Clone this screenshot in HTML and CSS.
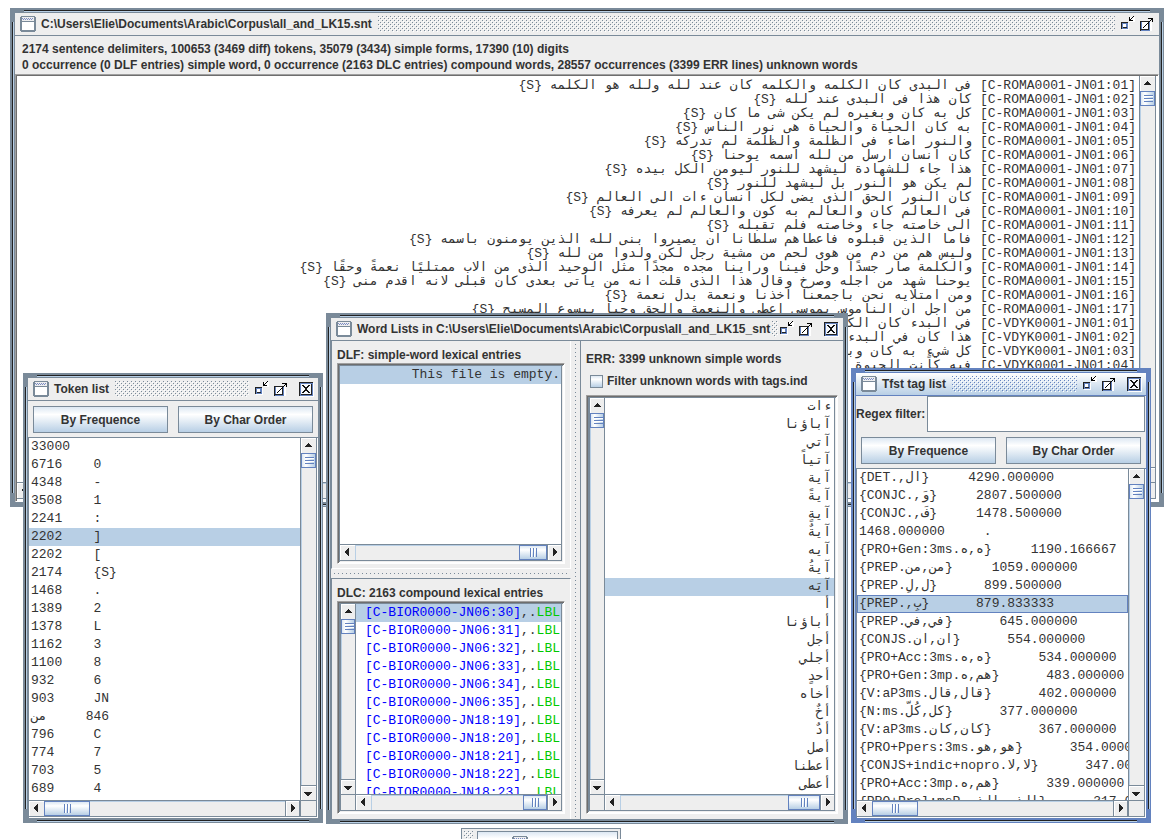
FILE: index.html
```html
<!DOCTYPE html>
<html lang="en">
<head>
<meta charset="utf-8">
<title>Corpus workspace</title>
<link rel="stylesheet" href="styles.css">
</head>
<body>
<svg class="sprite" aria-hidden="true">
  <symbol id="i-menu" viewBox="0 0 16 16"><path fill="#7a8a99" d="M1 0h14v1h1v14h-1v1H1v-1H0V1h1z"/><path fill="#fff" d="M2 6h12v8H2z"/><path fill="#eee" d="M2 1h12v4H2z"/><path fill="#7b8cc4" d="M2 2h1v1H2zM4 2h1v1H4zM6 2h1v1H6zM8 2h1v1H8zM10 2h1v1h-1zM12 2h1v1h-1zM3 3h1v1H3zM5 3h1v1H5zM7 3h1v1H7zM9 3h1v1H9zM11 3h1v1h-1z"/></symbol>
  <symbol id="i-min" viewBox="0 0 16 16"><path fill="#fff" d="M2 7h7v7H2zM10 1h5v5h-5z"/><path fill="#222" d="M1 6h7v7H1z"/><path fill="#6382bf" d="M2 7h6v6H2z"/><path fill="#222" d="M3 11h4v1H3z"/><path fill="#fff" d="M3 8h3v3H3z"/><path fill="#000" d="M9 1h1v4H9zM9 4h4v1H9zM10 3h1v1h-1zM11 2h1v1h-1zM12 1h1v1h-1zM13 0h1v1h-1z"/></symbol>
  <symbol id="i-max" viewBox="0 0 16 16"><path fill="#fff" d="M2 6h11v9H2z"/><path fill="#222" d="M1 5h10v10H1z"/><path fill="#6382bf" d="M2 6h9v9H2z"/><path fill="#222" d="M2 13h8v1H2zM9 6h1v8H9z"/><path fill="#fff" d="M3 6h6v7H3z"/><path fill="#000" d="M4 11h1v1H4zM5 10h1v1H5zM6 9h1v1H6zM7 8h1v1H7zM8 7h1v1H8zM9 6h1v1H9zM10 5h1v1h-1zM11 4h1v1h-1zM12 3h1v1h-1zM9 2h5v1H9zM13 2h1v4h-1z"/></symbol>
  <symbol id="i-close" viewBox="0 0 16 16"><path fill="#fff" d="M2 2h14v14H2z"/><path fill="#222" d="M1 1h14v14H1z"/><path fill="#6382bf" d="M2 2h13v13H2z"/><path fill="#222" d="M3 13h11v1H3zM13 3h1v11h-1z"/><path fill="#f4f7fb" d="M3 3h10v10H3z"/><path fill="#111" d="M4 4h2v1H4zM5 5h2v1H5zM6 6h2v1H6zM7 7h2v2H7zM6 9h2v1H6zM5 10h2v1H5zM4 11h2v1H4zM10 4h2v1h-2zM9 5h2v1H9zM8 6h2v1H8zM8 9h2v1H8zM9 10h2v1H9zM10 11h2v1h-2z"/></symbol>
  <symbol id="a-up" viewBox="0 0 15 15"><path fill="#222" d="M7 5h1v1h1v1h1v1h1v1H4V8h1V7h1V6h1z"/></symbol>
  <symbol id="a-down" viewBox="0 0 15 15"><path fill="#222" d="M3 6h8v1h-1v1H9v1H8v1H6V9H5V8H4V7H3z"/></symbol>
  <symbol id="a-left" viewBox="0 0 15 15"><path fill="#222" d="M9 3v8H8v-1H7V9H6V8H5V6h1V5h1V4h1V3z"/></symbol>
  <symbol id="a-right" viewBox="0 0 15 15"><path fill="#222" d="M5 3v8h1v-1h1V9h1V8h1V6H8V5H7V4H6V3z"/></symbol>
</svg>
<main class="desktop">

<section class="win win-corpus" aria-labelledby="t1">
  <header class="title"><svg class="ico"><use href="#i-menu"/></svg><h2 id="t1">C:\Users\Elie\Documents\Arabic\Corpus\all_and_LK15.snt</h2><span class="bumps"></span>
    <button class="tool" aria-label="Minimize"><svg class="ico"><use href="#i-min"/></svg></button><button class="tool" aria-label="Maximize"><svg class="ico"><use href="#i-max"/></svg></button></header>
  <div class="stats"><p>2174 sentence delimiters, 100653 (3469 diff) tokens, 35079 (3434) simple forms, 17390 (10) digits</p><p>0 occurrence (0 DLF entries) simple word, 0 occurrence (2163 DLC entries) compound words, 28557 occurrences (3399 ERR lines) unknown words</p></div>
  <div class="pane bevel corpus-pane">
    <div class="view text" dir="rtl" lang="ar">
      <p><bdi dir="ltr">[C-ROMA0001-JN01:01]</bdi> فى البدى كان الكلمه والكلمه كان عند لله ولله هو الكلمه {S}</p>
      <p><bdi dir="ltr">[C-ROMA0001-JN01:02]</bdi> كان هذا فى البدى عند لله {S}</p>
      <p><bdi dir="ltr">[C-ROMA0001-JN01:03]</bdi> كل به كان وبغيره لم يكن شى ما كان {S}</p>
      <p><bdi dir="ltr">[C-ROMA0001-JN01:04]</bdi> به كان الحياة والحياة هى نور الناس {S}</p>
      <p><bdi dir="ltr">[C-ROMA0001-JN01:05]</bdi> والنور اضاء فى الظلمة والظلمة لم تدركه {S}</p>
      <p><bdi dir="ltr">[C-ROMA0001-JN01:06]</bdi> كان انسان ارسل من لله اسمه يوحنا {S}</p>
      <p><bdi dir="ltr">[C-ROMA0001-JN01:07]</bdi> هذا جاء للشهادة ليشهد للنور ليومن الكل بيده {S}</p>
      <p><bdi dir="ltr">[C-ROMA0001-JN01:08]</bdi> لم يكن هو النور بل ليشهد للنور {S}</p>
      <p><bdi dir="ltr">[C-ROMA0001-JN01:09]</bdi> كان النور الحق الذى يضى لكل انسان ءات الى العالم {S}</p>
      <p><bdi dir="ltr">[C-ROMA0001-JN01:10]</bdi> فى العالم كان والعالم به كون والعالم لم يعرفه {S}</p>
      <p><bdi dir="ltr">[C-ROMA0001-JN01:11]</bdi> الى خاصته جاء وخاصته فلم تقبله {S}</p>
      <p><bdi dir="ltr">[C-ROMA0001-JN01:12]</bdi> فاما الذين قبلوه فاعطاهم سلطانا ان يصيروا بنى لله الذين يومنون باسمه {S}</p>
      <p><bdi dir="ltr">[C-ROMA0001-JN01:13]</bdi> وليس هم من دم من هوى لحم من مشية رجل لكن ولدوا من لله {S}</p>
      <p><bdi dir="ltr">[C-ROMA0001-JN01:14]</bdi> والكلمة صار جسدًا وحل فينا وراينا مجده مجدًا مثل الوحيد الذى من الاب ممتليًا نعمةً وحقًا {S}</p>
      <p><bdi dir="ltr">[C-ROMA0001-JN01:15]</bdi> يوحنا شهد من اجله وصرخ وقال هذا الذى قلت انه من ياتى بعدى كان قبلى لانه اقدم منى {S}</p>
      <p><bdi dir="ltr">[C-ROMA0001-JN01:16]</bdi> ومن امتلايه نحن باجمعنا اخذنا ونعمة بدل نعمة {S}</p>
      <p><bdi dir="ltr">[C-ROMA0001-JN01:17]</bdi> من اجل ان الناموس بموسى اعطى والنعمة والحق وحيا بيسوع المسيح {S}</p>
      <p><bdi dir="ltr">[C-VDYK0001-JN01:01]</bdi> في البدء كان الكلمة</p>
      <p><bdi dir="ltr">[C-VDYK0001-JN01:02]</bdi> هذا كان في البدء</p>
      <p><bdi dir="ltr">[C-VDYK0001-JN01:03]</bdi> كل شيءٍ به كان وبغيره</p>
      <p><bdi dir="ltr">[C-VDYK0001-JN01:04]</bdi> فيه كانت الحيوة</p>
    </div>
    <div class="vbar"><button aria-label="Scroll up"><svg><use href="#a-up"/></svg></button><div class="track"><i class="thumb"></i></div><button aria-label="Scroll down"><svg><use href="#a-down"/></svg></button></div>
    <div class="hbar"><button aria-label="Scroll left"><svg><use href="#a-left"/></svg></button><div class="track"><i class="thumb t45"></i></div><button aria-label="Scroll right"><svg><use href="#a-right"/></svg></button></div>
    <div class="corner"></div>
  </div>
</section>

<section class="win win-token" aria-labelledby="t2">
  <header class="title"><svg class="ico"><use href="#i-menu"/></svg><h2 id="t2">Token list</h2><span class="bumps"></span>
    <button class="tool" aria-label="Minimize"><svg class="ico"><use href="#i-min"/></svg></button><button class="tool" aria-label="Maximize"><svg class="ico"><use href="#i-max"/></svg></button><button class="tool shut" aria-label="Close"><svg class="ico"><use href="#i-close"/></svg></button></header>
  <div class="pair"><button class="btn">By Frequence</button><button class="btn">By Char Order</button></div>
  <div class="pane line">
    <ul class="view rows">
      <li>33000</li><li>6716    0</li><li>4348    -</li><li>3508    1</li><li>2241    :</li><li class="sel">2202    ]</li><li>2202    [</li><li>2174    {S}</li><li>1468    .</li><li>1389    2</li><li>1378    L</li><li>1162    3</li><li>1100    8</li><li>932     6</li><li>903     JN</li><li><bdi>من</bdi>     846</li><li>796     C</li><li>774     7</li><li>703     5</li><li>689     4</li>
    </ul>
    <div class="vbar"><button aria-label="Scroll up"><svg><use href="#a-up"/></svg></button><div class="track"><i class="thumb"></i></div><button aria-label="Scroll down"><svg><use href="#a-down"/></svg></button></div>
    <div class="hbar"><button aria-label="Scroll left"><svg><use href="#a-left"/></svg></button><div class="track"><i class="thumb t45"></i></div><button aria-label="Scroll right"><svg><use href="#a-right"/></svg></button></div>
    <div class="corner"></div>
  </div>
</section>

<section class="win win-words" aria-labelledby="t3">
  <header class="title"><svg class="ico"><use href="#i-menu"/></svg><h2 id="t3">Word Lists in C:\Users\Elie\Documents\Arabic\Corpus\all_and_LK15_snt</h2><span class="bumps"></span>
    <button class="tool" aria-label="Minimize"><svg class="ico"><use href="#i-min"/></svg></button><button class="tool" aria-label="Maximize"><svg class="ico"><use href="#i-max"/></svg></button><button class="tool shut" aria-label="Close"><svg class="ico"><use href="#i-close"/></svg></button></header>
  <div class="split">
    <div class="left">
      <div class="part dlf">
        <h3>DLF: simple-word lexical entries</h3>
        <div class="pane bevel flat">
          <ul class="view rows end"><li class="sel">This file is empty.</li></ul>
          <div class="hbar"><button aria-label="Scroll left"><svg><use href="#a-left"/></svg></button><div class="track"><i class="thumb t28 last"></i></div><button aria-label="Scroll right"><svg><use href="#a-right"/></svg></button></div>
        </div>
      </div>
      <div class="hsplit"></div>
      <div class="part dlc">
        <h3>DLC: 2163 compound lexical entries</h3>
        <div class="pane bevel mirror">
          <div class="vbar"><button aria-label="Scroll up"><svg><use href="#a-up"/></svg></button><div class="track"><i class="thumb"></i></div><button aria-label="Scroll down"><svg><use href="#a-down"/></svg></button></div>
          <ul class="view rows end">
            <li class="sel"><b>[C-BIOR0000-JN06:30]</b>,.<em>LBL</em></li><li><b>[C-BIOR0000-JN06:31]</b>,.<em>LBL</em></li><li><b>[C-BIOR0000-JN06:32]</b>,.<em>LBL</em></li><li><b>[C-BIOR0000-JN06:33]</b>,.<em>LBL</em></li><li><b>[C-BIOR0000-JN06:34]</b>,.<em>LBL</em></li><li><b>[C-BIOR0000-JN06:35]</b>,.<em>LBL</em></li><li><b>[C-BIOR0000-JN18:19]</b>,.<em>LBL</em></li><li><b>[C-BIOR0000-JN18:20]</b>,.<em>LBL</em></li><li><b>[C-BIOR0000-JN18:21]</b>,.<em>LBL</em></li><li><b>[C-BIOR0000-JN18:22]</b>,.<em>LBL</em></li><li><b>[C-BIOR0000-JN18:23]</b>,.<em>LBL</em></li>
          </ul>
          <div class="corner"></div>
          <div class="hbar"><button aria-label="Scroll left"><svg><use href="#a-left"/></svg></button><div class="track"><i class="thumb t24 last"></i></div><button aria-label="Scroll right"><svg><use href="#a-right"/></svg></button></div>
        </div>
      </div>
    </div>
    <div class="vsplit"></div>
    <div class="part err">
      <h3>ERR: 3399 unknown simple words</h3>
      <label class="check"><input type="checkbox">Filter unknown words with tags.ind</label>
      <div class="pane bevel mirror">
        <div class="vbar"><button aria-label="Scroll up"><svg><use href="#a-up"/></svg></button><div class="track"><i class="thumb"></i></div><button aria-label="Scroll down"><svg><use href="#a-down"/></svg></button></div>
        <ul class="view rows end arabic" lang="ar">
          <li>ءات</li><li>آباؤنا</li><li>آتي</li><li>آتياً</li><li>آية</li><li>آيةً</li><li>آيةٍ</li><li>آيةٌ</li><li>آيه</li><li>آيةُ</li><li class="sel">آيَه</li><li>أ</li><li>أباؤنا</li><li>أجل</li><li>أجلي</li><li>أحدٍ</li><li>أخاه</li><li>أخٌ</li><li>أدٌ</li><li>أصل</li><li>أعطنا</li><li>أعطى</li>
        </ul>
        <div class="corner"></div>
        <div class="hbar"><button aria-label="Scroll left"><svg><use href="#a-left"/></svg></button><div class="track"><i class="thumb t32 last"></i></div><button aria-label="Scroll right"><svg><use href="#a-right"/></svg></button></div>
      </div>
    </div>
  </div>
</section>

<section class="win active win-tags" aria-labelledby="t4">
  <header class="title"><svg class="ico"><use href="#i-menu"/></svg><h2 id="t4">Tfst tag list</h2><span class="bumps"></span>
    <button class="tool" aria-label="Minimize"><svg class="ico"><use href="#i-min"/></svg></button><button class="tool" aria-label="Maximize"><svg class="ico"><use href="#i-max"/></svg></button><button class="tool shut" aria-label="Close"><svg class="ico"><use href="#i-close"/></svg></button></header>
  <div class="filter"><label for="regex">Regex filter:</label><input id="regex" type="text"></div>
  <div class="pair"><button class="btn">By Frequence</button><button class="btn">By Char Order</button></div>
  <div class="pane line">
    <ul class="view rows">
      <li>{DET.,<bdi>ال</bdi>}     4290.000000</li>
      <li>{CONJC.,<bdi>وَ</bdi>}     2807.500000</li>
      <li>{CONJC.,<bdi>فَ</bdi>}     1478.500000</li>
      <li>1468.000000     .</li>
      <li>{PRO+Gen:3ms.<bdi>ه,ه</bdi>}     1190.166667</li>
      <li>{PREP.<bdi>من,من</bdi>}     1059.000000</li>
      <li>{PREP.<bdi>ل,لِ</bdi>}      899.500000</li>
      <li class="sel lead">{PREP.,<bdi>بِ</bdi>}      879.833333</li>
      <li>{PREP.<bdi>في,في</bdi>}      645.000000</li>
      <li>{CONJS.<bdi>ان,ان</bdi>}      554.000000</li>
      <li>{PRO+Acc:3ms.<bdi>ه,ه</bdi>}      534.000000</li>
      <li>{PRO+Gen:3mp.<bdi>هم,ه</bdi>}      483.000000</li>
      <li>{V:aP3ms.<bdi>قال,قال</bdi>}      402.000000</li>
      <li>{N:ms.<bdi>كل,كُلّ</bdi>}      377.000000</li>
      <li>{V:aP3ms.<bdi>كان,كان</bdi>}      367.000000</li>
      <li>{PRO+Ppers:3ms.<bdi>هو,هو</bdi>}      354.000000</li>
      <li>{CONJS+indic+nopro.<bdi>لا,لا</bdi>}      347.000000</li>
      <li>{PRO+Acc:3mp.<bdi>هم,ه</bdi>}      339.000000</li>
      <li>{PRO+Prel:msP.<bdi>الذي,الذي</bdi>}      317.000000</li>
    </ul>
    <div class="vbar"><button aria-label="Scroll up"><svg><use href="#a-up"/></svg></button><div class="track"><i class="thumb"></i></div><button aria-label="Scroll down"><svg><use href="#a-down"/></svg></button></div>
    <div class="hbar"><button aria-label="Scroll left"><svg><use href="#a-left"/></svg></button><div class="track"><i class="thumb t45"></i></div><button aria-label="Scroll right"><svg><use href="#a-right"/></svg></button></div>
    <div class="corner"></div>
  </div>
</section>

<div class="dock"><span class="bumps"></span><button class="dock-item" aria-label="Restore window"><svg class="ico"><use href="#i-menu"/></svg></button></div>
</main>
</body>
</html>
```

FILE: styles.css
```css
:root {
  --edge: #7a8a99;
  --blue: #6382bf;
  --pale: #b8cfe5;
  --face: #eeeeee;
  --ink: #333333;
}
* { box-sizing: border-box; margin: 0; padding: 0; }
body {
  background: #fff;
  color: var(--ink);
  font: bold 12px/16px "Liberation Sans", Arial, sans-serif;
}
h2, h3 { font-size: 12px; font-weight: bold; white-space: nowrap; }
ul { list-style: none; }
button, input { font: inherit; color: inherit; border-radius: 0; }
svg { display: block; shape-rendering: crispEdges; }
.sprite { position: absolute; width: 0; height: 0; }
.desktop { position: relative; height: 100vh; overflow: hidden; }

/* Internal frames */
.win {
  --frame: var(--edge);
  position: absolute;
  display: flex;
  flex-direction: column;
  padding: 5px;
  background:
    linear-gradient(#222, #222) 14px 2px / calc(100% - 28px) 1px no-repeat,
    linear-gradient(var(--pale), var(--pale)) 14px 3px / calc(100% - 28px) 1px no-repeat,
    linear-gradient(#222, #222) 14px calc(100% - 2px) / calc(100% - 28px) 1px no-repeat,
    linear-gradient(var(--pale), var(--pale)) 14px calc(100% - 1px) / calc(100% - 28px) 1px no-repeat,
    linear-gradient(#222, #222) 2px 14px / 1px calc(100% - 28px) no-repeat,
    linear-gradient(var(--pale), var(--pale)) 3px 14px / 1px calc(100% - 28px) no-repeat,
    linear-gradient(#222, #222) calc(100% - 2px) 14px / 1px calc(100% - 28px) no-repeat,
    linear-gradient(var(--pale), var(--pale)) calc(100% - 1px) 14px / 1px calc(100% - 28px) no-repeat,
    var(--frame);
}
.active { --frame: var(--blue); }
.win-corpus { left: 10px; right: 10px; top: 8px; height: 499px; }
.win-token { left: 23px; top: 373px; width: 300px; height: 450px; }
.win-words { left: 326px; top: 313px; width: 522px; height: 511px; }
.win-tags { left: 851px; top: 368px; width: 300px; height: 455px; }

.title {
  display: flex;
  align-items: center;
  flex: 0 0 23px;
  padding: 0 4px 0 5px;
  background: var(--face);
  border-bottom: 1px solid var(--frame);
}
.active .title { background: linear-gradient(#fff, var(--pale)); }
.title h2 { margin: 0 6px 0 5px; }
.ico { width: 16px; height: 16px; flex: none; }
.tool { flex: none; margin-left: 3px; border: 0; background: none; }
.bumps + .tool { margin-left: 5px; }
.shut { margin-left: 9px; }
.win-words .title h2 { margin-right: 2px; }
.win-words .bumps + .tool { margin-left: 1px; }
.bumps {
  --dot: var(--frame, #7a8a99);
  flex: 1;
  height: 16px;
  background:
    conic-gradient(at 1px 1px, transparent 75%, var(--dot) 0) 0 0 / 4px 4px,
    conic-gradient(at 1px 1px, transparent 75%, var(--dot) 0) 2px 2px / 4px 4px,
    conic-gradient(at 1px 1px, transparent 75%, #fff 0) 1px 1px / 4px 4px,
    conic-gradient(at 1px 1px, transparent 75%, #fff 0) 3px 3px / 4px 4px;
}

/* Corpus window */
.stats { padding: 5px 7px 1px; background: var(--face); white-space: nowrap; overflow: hidden; }
.text { padding: 3px 3px 0; font: 13px/14px "Liberation Mono", "DejaVu Sans Mono", monospace; white-space: nowrap; }

/* Scroll panes */
.pane {
  flex: 1;
  min-height: 0;
  display: grid;
  grid-template: minmax(0, 1fr) 17px / minmax(0, 1fr) 17px;
  background: var(--face);
}
.mirror { grid-template-columns: 16px minmax(0, 1fr); }
.flat { grid-template-columns: minmax(0, 1fr); }
.line { border: 1px solid var(--edge); border-right: 0; border-bottom: 0; margin: 0 1px 1px 0; }
.bevel {
  border: 1px solid;
  border-color: #a0a0a0 #fff #fff #a0a0a0;
  padding: 2px;
  box-shadow: inset 1px 1px #6e6e6e, inset -1px -1px #fff, inset 2px 2px var(--edge);
}
.win .corpus-pane { padding: 1px 2px 2px 1px; box-shadow: inset 1px 1px #6e6e6e, inset -2px -2px #fff; }
.stats + .pane { background: var(--face); }
.win-corpus { --inner: var(--face); }
.corpus-pane { margin: 0; outline: 0; }
.view { overflow: hidden; background: #fff; }
.rows { font: 13px/18px "Liberation Mono", "DejaVu Sans Mono", monospace; }
.rows li { height: 18px; padding: 0 2px; white-space: pre; }
.end { text-align: right; border-right: 1px solid var(--edge); }
.end li { display: flex; justify-content: flex-end; padding: 0 1px; }
.arabic li { padding: 0 3px; }
.sel { background: var(--pale); }
.lead { box-shadow: inset 0 0 0 1px var(--blue); }
.rows b { font-weight: normal; color: #0000ff; }
.rows em { font-style: normal; color: #00c800; }

.vbar, .hbar { display: flex; min-width: 0; min-height: 0; border: 0 solid var(--edge); }
.vbar { flex-direction: column; border-width: 0 1px; }
.hbar { border-width: 1px 0; }
.vbar button, .hbar button { flex: 0 0 15px; border: 0 solid var(--edge); background: var(--face); box-shadow: inset 1px 1px #fff; overflow: hidden; }
.vbar button:last-child { border-top-width: 1px; }
.hbar button:last-child { border-left-width: 1px; border-right-width: 1px; }
.vbar svg, .hbar svg { width: 15px; height: 15px; }
.track { flex: 1; display: flex; min-width: 0; min-height: 0; }
.vbar .track { flex-direction: column; box-shadow: inset 1px 0 var(--pale); }
.hbar .track { box-shadow: inset 1px 1px var(--pale); }
.thumb { flex: none; border: 1px solid var(--blue); }
.vbar .thumb {
  height: 15px;
  background:
    repeating-linear-gradient(var(--blue) 0 1px, #fff 1px 2px, transparent 2px 3px) 3px 3px / 9px 7px no-repeat,
    linear-gradient(90deg, #dde8f3, #fff 30%, var(--pale));
}
.hbar .thumb {
  background:
    repeating-linear-gradient(90deg, var(--blue) 0 1px, #fff 1px 2px, transparent 2px 3px) center / 7px 9px no-repeat,
    linear-gradient(#dde8f3, #fff 30%, var(--pale));
}
.t45 { width: 46px; }
.t32 { width: 32px; }
.t28 { width: 28px; }
.t24 { width: 24px; }
.last { margin-left: auto; }
.corner { border: 0 solid var(--edge); border-width: 1px 1px 1px 1px; }

/* Buttons and fields */
.pair { display: flex; gap: 10px; padding: 5px 5px 4px; background: var(--face); }
.pair + .pane { box-shadow: 1px 1px #fff; }
.btn {
  flex: 1;
  height: 27px;
  border: 1px solid var(--edge);
  background: linear-gradient(#dde8f3, #fff 30%, var(--pale));
}
.filter { display: flex; align-items: center; background: var(--face); }
.filter label { padding-right: 2px; white-space: nowrap; }
.filter input { flex: 1; min-width: 0; height: 36px; margin-right: 1px; padding: 0 4px; border: 1px solid var(--edge); background: #fff; }

/* Word lists */
.split { flex: 1; min-height: 0; display: grid; grid-template-columns: 240px 9px minmax(0, 1fr); background: var(--face); }
.left { display: flex; flex-direction: column; min-height: 0; }
.part { display: flex; flex-direction: column; min-height: 0; padding: 6px 5px; border-left: 1px solid var(--edge); }
.dlf { flex: 0 0 228px; padding-bottom: 4px; border-right: 1px solid #fff; border-bottom: 1px solid #fff; }
.dlc { flex: 1; padding-bottom: 5px; border-top: 1px solid var(--edge); border-right: 1px solid #fff; }
.hsplit, .vsplit {
  background:
    conic-gradient(at 1px 1px, transparent 75%, var(--edge) 0) 3px 3px / 4px 4px content-box,
    conic-gradient(at 1px 1px, transparent 75%, var(--edge) 0) 5px 5px / 4px 4px content-box;
}
.hsplit { flex: 0 0 9px; padding: 3px 2px; }
.vsplit { padding: 2px 3px; }
.err { padding: 10px 5px 5px; }
.check { display: flex; align-items: center; gap: 4px; height: 28px; padding-left: 4px; white-space: nowrap; }
.check input {
  appearance: none;
  width: 13px;
  height: 13px;
  border: 1px solid var(--edge);
  background: linear-gradient(#dde8f3, #fff 30%, var(--pale));
}

/* Minimized window bar */
.dock {
  position: absolute;
  left: 461px;
  top: 828px;
  width: 160px;
  height: 30px;
  display: flex;
  gap: 4px;
  padding: 2px;
  border: 1px solid var(--edge);
  background: var(--face);
}
.dock .bumps { flex: 0 0 9px; height: auto; }
.dock-item { flex: 1; display: flex; padding: 4px 0 0 34px; border: 1px solid var(--edge); background: linear-gradient(#dde8f3, #fff 30%, var(--pale)); }
```
